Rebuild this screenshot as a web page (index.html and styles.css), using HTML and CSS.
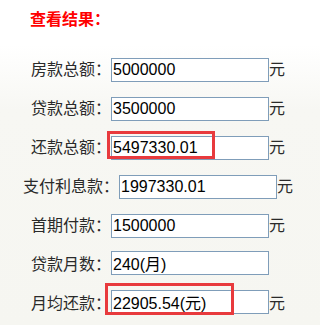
FILE: index.html
```html
<!DOCTYPE html>
<html lang="zh-CN">
<head>
<meta charset="utf-8">
<title>查看结果</title>
<link rel="stylesheet" href="styles.css">
</head>
<body>
<div class="page">
  <h2 class="title">查看结果：</h2>
  <div class="rows">
    <div class="row"><span class="label">房款总额：</span><span class="field"><input class="box" value="5000000"></span><span class="unit">元</span></div>
    <div class="row"><span class="label">贷款总额：</span><span class="field"><input class="box" value="3500000"></span><span class="unit">元</span></div>
    <div class="row"><span class="label">还款总额：</span><span class="field"><input class="box" value="5497330.01"><span class="mark mark-a"></span></span><span class="unit">元</span></div>
    <div class="row"><span class="label">支付利息款：</span><span class="field"><input class="box" value="1997330.01"></span><span class="unit">元</span></div>
    <div class="row"><span class="label">首期付款：</span><span class="field"><input class="box" value="1500000"></span><span class="unit">元</span></div>
    <div class="row"><span class="label">贷款月数：</span><span class="field"><input class="box" value="240(月)"></span><span class="unit hidden">元</span></div>
    <div class="row"><span class="label">月均还款：</span><span class="field"><input class="box" value="22905.54(元)"><span class="mark mark-b"></span></span><span class="unit">元</span></div>
  </div>
</div>
</body>
</html>
```

FILE: styles.css
```css
html, body {
  margin: 0;
  padding: 0;
}
body {
  width: 312px;
  height: 325px;
  overflow: hidden;
  background: linear-gradient(#ffffff 0px, #ffffff 45px, #f7f7f3 110px, #f6f6f1 325px);
  font-family: "Noto Sans CJK SC", "Liberation Sans", sans-serif;
}
.page {
  padding-top: 7px;
}
.title {
  margin: 0 0 0 30px;
  font-size: 16px;
  line-height: 22px;
  font-weight: bold;
  color: #ff0000;
}
.rows {
  display: flex;
  flex-direction: column;
  gap: 15px;
  padding-top: 27px;
  padding-left: 4px;
}
.row {
  display: flex;
  justify-content: center;
  align-items: center;
  height: 24px;
}
.label, .unit {
  font-size: 16px;
  line-height: 24px;
  color: #2a2a2a;
  white-space: nowrap;
}
.hidden {
  visibility: hidden;
}
.field {
  position: relative;
  display: block;
  width: 158px;
  height: 24px;
}
.box {
  box-sizing: border-box;
  width: 158px;
  height: 24px;
  margin: 0;
  padding: 0 0 0 1px;
  border: 1px solid #7f9db9;
  background: #fff;
  font-family: "Liberation Sans", Arial, "Noto Sans CJK SC", sans-serif;
  font-size: 16px;
  color: #000;
  outline: none;
}
.mark {
  position: absolute;
  box-sizing: border-box;
  border: 3px solid #e83a3d;
}
.mark-a {
  left: -4px;
  top: -3px;
  width: 108px;
  height: 28px;
}
.mark-b {
  left: -6px;
  top: -7px;
  width: 129px;
  height: 32px;
}
```
